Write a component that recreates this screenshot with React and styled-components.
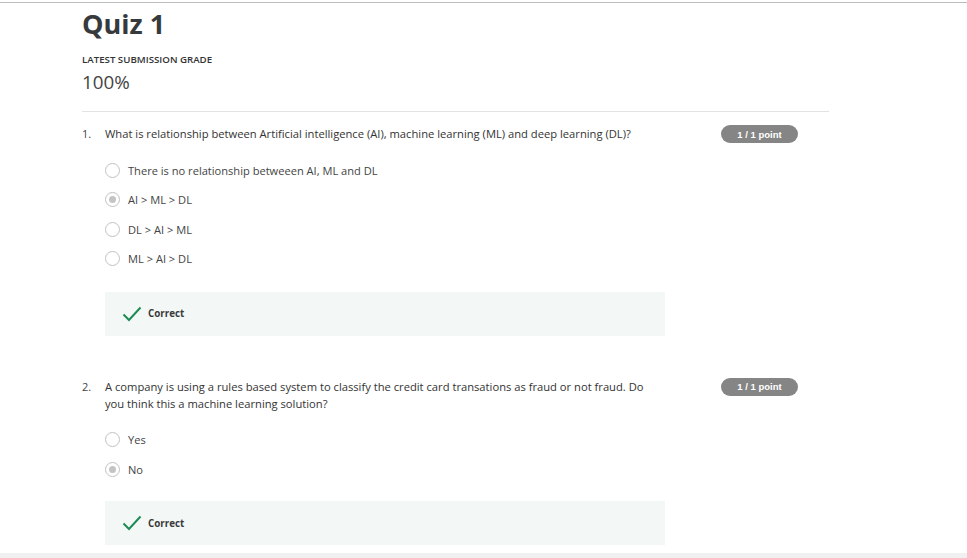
import React from "react";
import styled, { createGlobalStyle } from "styled-components";

const GlobalStyle = createGlobalStyle`
  html, body { margin: 0; padding: 0; background: #fff; }
  body { font-family: "Open Sans", "Noto Sans", sans-serif; color: #333; }
  * { box-sizing: border-box; }
`;

const Page = styled.div`
  width: 967px;
  height: 558px;
  overflow: hidden;
  padding-top: 2px;
  display: flex;
  flex-direction: column;
`;

const TopRule = styled.div`
  height: 1px;
  background: #bdbdbd;
  flex: none;
`;

const Content = styled.main`
  margin-left: 82px;
  width: 747px;
  flex: none;
`;

const Title = styled.h1`
  margin: 3px 0 0;
  font-size: 27px;
  line-height: 36px;
  font-weight: 700;
  color: #373a3c;
`;

const GradeLabel = styled.div`
  margin-top: 12px;
  font-size: 9.7px;
  line-height: 12px;
  font-weight: 600;
  color: #333;
  text-transform: uppercase;
`;

const GradeValue = styled.div`
  margin-top: 4px;
  font-size: 18.8px;
  line-height: 24px;
  color: #444;
`;

const Divider = styled.hr`
  margin: 17px 0 0;
  border: none;
  border-top: 1px solid #e2e2e2;
`;

const Question = styled.section`
  display: flex;
  align-items: flex-start;
  margin-top: ${(p) => p.$top}px;
`;

const Number = styled.div`
  width: 23px;
  flex: none;
  font-size: 11px;
  line-height: 17px;
  color: #444;
`;

const Body = styled.div`
  width: 560px;
  flex: none;
`;

const Prompt = styled.div`
  max-width: 545px;
  font-size: 11.2px;
  line-height: 17px;
  color: #333;
`;

const Badge = styled.div`
  margin-left: 56px;
  margin-top: 0;
  width: 77px;
  height: 18px;
  border-radius: 9px;
  background: #858585;
  color: #fff;
  font-family: "Liberation Sans", Arial, sans-serif;
  font-weight: 700;
  font-size: 9.5px;
  display: flex;
  align-items: center;
  justify-content: center;
  flex: none;
`;

const Options = styled.div`
  display: flex;
  flex-direction: column;
  gap: 15.5px;
  margin-top: ${(p) => p.$top}px;
`;

const Option = styled.label`
  display: flex;
  align-items: center;
  gap: 8px;
  height: 14px;
  font-size: 11.1px;
  color: #444;
`;

const Radio = styled.span`
  width: 15px;
  height: 15px;
  border-radius: 50%;
  border: 1px solid #c2c2c2;
  background: #fff;
  display: flex;
  align-items: center;
  justify-content: center;
  flex: none;
  &::after {
    content: "";
    width: 7px;
    height: 7px;
    border-radius: 50%;
    background: ${(p) => (p.$checked ? "#c4c4c4" : "transparent")};
  }
`;

const Feedback = styled.div`
  margin-top: ${(p) => p.$top}px;
  height: 44px;
  background: #f3f8f6;
  display: flex;
  align-items: center;
  gap: 6px;
  padding-left: 17px;
  font-size: 9.8px;
  font-weight: 700;
  color: #3a3a3a;
`;

const BottomBar = styled.div`
  margin-top: 8px;
  flex: 1;
  background: #f0f0f0;
`;

const Check = () => (
  <svg width="20" height="16" viewBox="0 0 20 16" fill="none">
    <path d="M1.5 8.5 L7 14 L18.5 1.5" stroke="#1e8a55" strokeWidth="2" />
  </svg>
);

const questions = [
  {
    n: 1,
    top: 13,
    prompt:
      "What is relationship between Artificial intelligence (AI), machine learning (ML) and deep learning (DL)?",
    optTop: 21,
    options: ["There is no relationship betweeen AI, ML and DL", "AI > ML > DL", "DL > AI > ML", "ML > AI > DL"],
    checked: 1,
    fbTop: 26,
  },
  {
    n: 2,
    top: 42,
    prompt:
      "A company is using a rules based system to classify the credit card transations as fraud or not fraud. Do you think this a machine learning solution?",
    optTop: 21,
    options: ["Yes", "No"],
    checked: 1,
    fbTop: 25,
  },
];

export default function App() {
  return (
    <>
      <GlobalStyle />
      <Page>
        <TopRule />
        <Content>
          <Title>Quiz 1</Title>
          <GradeLabel>Latest Submission Grade</GradeLabel>
          <GradeValue>100%</GradeValue>
          <Divider />
          {questions.map((q) => (
            <Question key={q.n} $top={q.top}>
              <Number>{q.n}.</Number>
              <Body>
                <Prompt>{q.prompt}</Prompt>
                <Options $top={q.optTop}>
                  {q.options.map((o, i) => (
                    <Option key={o}>
                      <Radio $checked={i === q.checked} />
                      {o}
                    </Option>
                  ))}
                </Options>
                <Feedback $top={q.fbTop}>
                  <Check />
                  Correct
                </Feedback>
              </Body>
              <Badge>1 / 1 point</Badge>
            </Question>
          ))}
        </Content>
        <BottomBar />
      </Page>
    </>
  );
}
